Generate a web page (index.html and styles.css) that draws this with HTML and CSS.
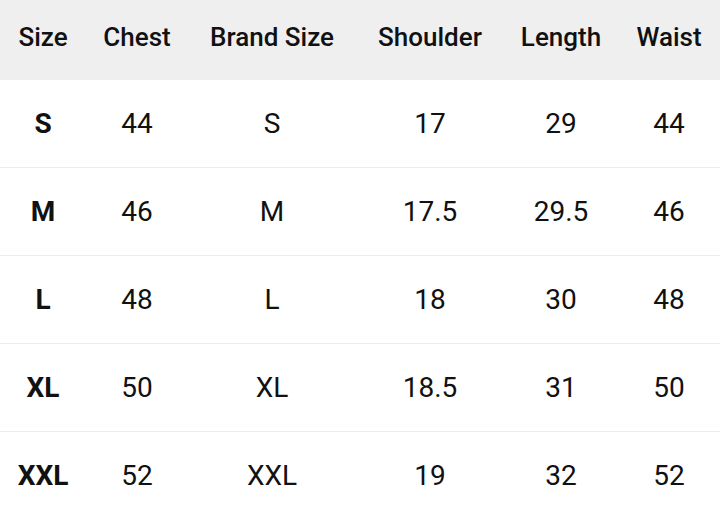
FILE: index.html
```html
<!DOCTYPE html>
<html>
<head>
<meta charset="utf-8">
<link rel="stylesheet" href="styles.css">
</head>
<body>
<table class="size-table">
  <colgroup>
    <col class="c-size"><col class="c-chest"><col class="c-brand"><col class="c-shoulder"><col class="c-length"><col class="c-waist">
  </colgroup>
  <thead>
    <tr><th>Size</th><th>Chest</th><th>Brand Size</th><th>Shoulder</th><th>Length</th><th>Waist</th></tr>
  </thead>
  <tbody>
    <tr><td class="sz">S</td><td>44</td><td>S</td><td>17</td><td>29</td><td>44</td></tr>
    <tr><td class="sz">M</td><td>46</td><td>M</td><td>17.5</td><td>29.5</td><td>46</td></tr>
    <tr><td class="sz">L</td><td>48</td><td>L</td><td>18</td><td>30</td><td>48</td></tr>
    <tr><td class="sz">XL</td><td>50</td><td>XL</td><td>18.5</td><td>31</td><td>50</td></tr>
    <tr><td class="sz">XXL</td><td>52</td><td>XXL</td><td>19</td><td>32</td><td>52</td></tr>
  </tbody>
</table>
</body>
</html>
```

FILE: styles.css
```css
html, body {
  margin: 0;
  padding: 0;
  background: #ffffff;
  overflow: hidden;
}
body {
  font-family: Roboto, "Liberation Sans", sans-serif;
  color: #111;
}
.size-table {
  width: 720px;
  border-collapse: collapse;
  table-layout: fixed;
}
.c-size { width: 86px; }
.c-chest { width: 102px; }
.c-brand { width: 168px; }
.c-shoulder { width: 148px; }
.c-length { width: 114px; }
.c-waist { width: 102px; }
.size-table thead tr {
  height: 80px;
}
.size-table th {
  background: #efefef;
  padding: 0 0 6px 0;
  font-size: 26px;
  font-weight: 500;
  text-align: center;
  white-space: nowrap;
}
.size-table td {
  height: 87px;
  padding: 0;
  font-size: 28px;
  font-weight: 400;
  text-align: center;
  border-bottom: 1px solid #ececec;
}
.size-table td.sz {
  font-weight: 700;
}
```
